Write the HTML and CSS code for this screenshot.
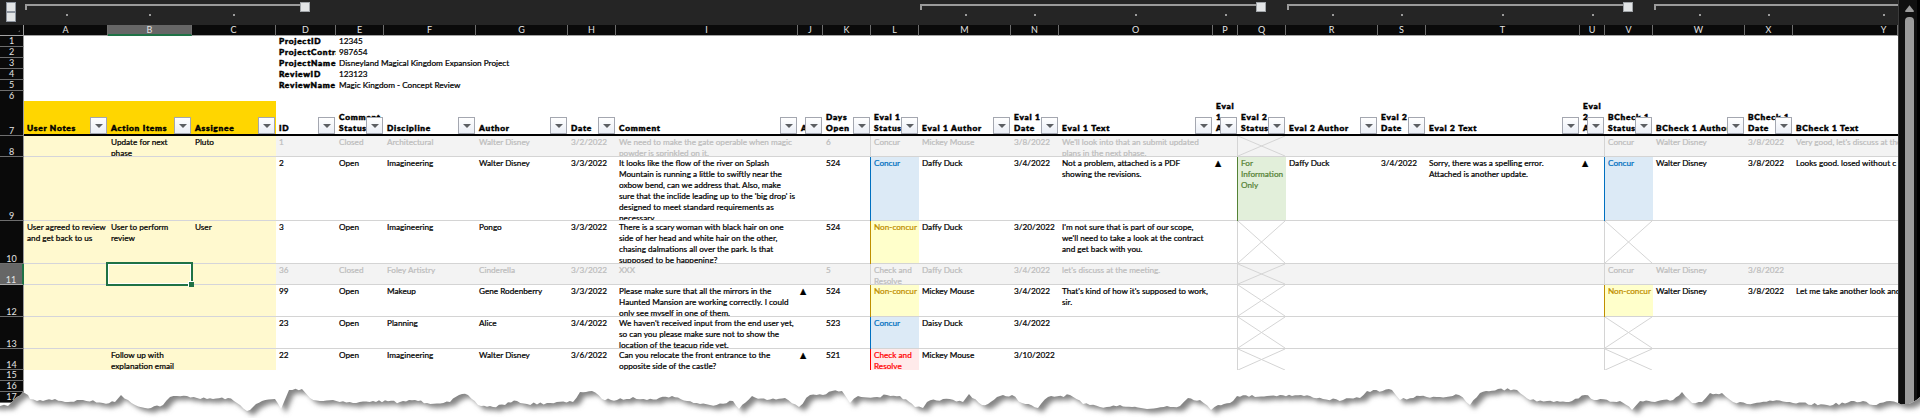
FILE: index.html
```html
<!DOCTYPE html>
<html lang="en">
<head>
<meta charset="utf-8">
<title>Review comments</title>
<link rel="stylesheet" href="styles.css">
</head>
<body>
<div class="app">
  <div class="main">
    <div class="outline cols" id="outline"></div>
    <div class="letters cols" id="letters"></div>
    <div class="rows" id="rows"></div>
    <div class="selection"><i></i></div>
  </div>
  <div class="scroll">
    <svg class="up" width="9" height="7" viewBox="0 0 9 7"><path d="M4.5 0.3 L9 6 Q9 7 8 7 H1 Q0 7 0 6 Z" fill="#9b9b9b"/></svg>
    <div class="thumb"></div>
  </div>
  <svg class="tear" id="tear" width="1920" height="50" viewBox="0 368 1920 50"></svg>
</div>
<script src="app.js"></script>
</body>
</html>
```
FILE: styles.css
```css
* { box-sizing: border-box; }
body {
  margin: 0;
  width: 1920px;
  height: 418px;
  overflow: hidden;
  background: #fff;
  color: #000;
  font: 8.2px/11px Lato, sans-serif;
}
.app { position: relative; display: flex; width: 1920px; height: 418px; overflow: hidden; }
.main { position: relative; width: 1898px; overflow: hidden; }
.cols {
  display: grid;
  grid-template-columns: 24px 84px 84px 84px 60px 48px 92px 92px 48px 182px 25px 48px 48px 92px 48px 154px 25px 48px 92px 48px 154px 25px 48px 92px 48px 105px;
}

/* outline bar */
.outline { height: 25px; background: #252525; }
.levels { display: flex; flex-direction: column; align-items: flex-start; padding: 2px 0 0 6px; }
.levels i { width: 10px; height: 10px; background: #e3e5e6; border: 1px solid #8d949e; }
.group { border-top: 2px solid #9b9b9b; margin-top: 4px; padding-top: 8px; display: flex; justify-content: center; }
.group i { width: 2px; height: 2px; background: #9b9b9b; }
.group.start { margin-left: 1px; background: linear-gradient(#9b9b9b, #9b9b9b) 0 0 / 2px 4px no-repeat; }
.group.wide { padding-left: 76px; }
.toggle { padding-top: 2px; display: flex; }
.toggle::before { content: ""; width: var(--arm); height: 2px; margin-top: 2px; background: #9b9b9b; }
.toggle i { width: 10px; height: 10px; background: #e3e5e6; border: 1px solid #a0a4a8; }

/* column letters */
.letters { height: 11px; background: #0a0a0a; color: #e4e4e4; font-size: 9px; text-align: center; }
.letters > div { border-right: 1px solid #6e6e6e; border-bottom: 1px solid #a3a3a3; height: 11px; line-height: 10px; overflow: hidden; }
.letters > .current { background: #666; border-bottom: 2px solid #1f7246; }
.letters > .corner { border-right-color: #9b9b9b; display: flex; justify-content: flex-end; align-items: flex-end; padding: 0 3px 3px 0; }
.corner::after { content: ""; border: 1.5px solid #555; border-left-color: transparent; border-top-color: transparent; }
.letters > .wide { padding-left: 77px; }

/* rows */
.row { height: var(--h); }
.num {
  display: flex; align-items: flex-end; justify-content: center;
  background: #0a0a0a; color: #e4e4e4; font-size: 9px; line-height: 10px;
  border-right: 1px solid #9b9b9b; border-bottom: 1px solid #6e6e6e;
}
.head .num, .data .num { line-height: 8px; }
.num.current { background: #666; border-right: 2px solid #1f7246; border-bottom-color: #aaa; }
.cell { padding-left: 3px; white-space: pre; overflow: hidden; height: var(--h); -webkit-text-stroke: .22px currentColor; }
.data .cell { padding-top: 1px; }
.spill { overflow: visible; }
.bold { font-weight: 900; font-size: 8.3px; letter-spacing: .76px; -webkit-text-stroke: .5px currentColor; }
.lined .cell { border-bottom: 1px solid #d4d4d4; }
.note { background: #fff9cf; }
.lined .note { border-bottom-color: #d5d5da; }
.closed .cell:not(.note) { background: #f3f3f3; color: #bdbdbd; }

/* filter header */
.head .cell {
  position: relative; display: flex; align-items: flex-end;
  border-bottom: 2px solid #000;
}
.head .note { background: #ffd600; }
.filter {
  position: absolute; right: 1px; bottom: 0; width: 17px; height: 17px;
  border: 1px solid #a4a7b0; background: linear-gradient(#fff, #eaeef6);
  display: flex; align-items: center; justify-content: center;
}
.filter::after { content: ""; border: 4px solid transparent; border-top: 4px solid #5c5f63; border-bottom: 0; }

/* status colours */
.concur { background: #dceaf6; color: #0070c0; box-shadow: -1px 0 #0070c0; }
.nonconcur { background: #ffffcb; color: #bf8f00; box-shadow: -1px 0 #bf8f00; }
.info { background: #e2efda; color: #548235; box-shadow: -1px 0 #548235; }
.resolve { background: #ffeaea; color: #ff0000; box-shadow: -1px 0 #ff0000; }
.muted, .cross { box-shadow: -1px 0 #d4d4d4; }
.data .cross { padding: 0; }
.cross svg { display: block; width: 100%; height: 100%; }
.flag { font-family: "DejaVu Sans", sans-serif; font-size: 8px; padding-left: 2px; }

.selection {
  position: absolute; left: 106px; top: 262px; width: 87px; height: 24px;
  border: 2px solid #1f7246; box-shadow: inset 0 0 0 1px #fff;
}
.selection i { position: absolute; right: -3px; bottom: -3px; width: 6px; height: 6px; background: #1f7246; border: solid #fff; border-width: 1px 0 0 1px; }

/* scroll bar */
.scroll { width: 22px; background: linear-gradient(90deg, #3a3a3a 1px, #101010 1px, #101010 19px, #000 19px); padding: 5px 0 0 7px; }
.up { display: block; }
.thumb { margin-top: 5px; width: 9px; height: 401px; border-radius: 4px 4px 0 0; background: #9b9b9b; }

.tear { position: absolute; left: 0; top: 368px; }
```
FILE: app.js
```js
const letters = 'ABCDEFGHIJKLMNOPQRSTUVWXY'.split('');
const noteCols = 'ABC';

// outline brackets above the columns
const starts = 'AMRW', toggles = { D: 24, Q: 18, V: 18 };
document.getElementById('outline').innerHTML = '<div class="levels"><i></i><i></i></div>' + letters.map(c => {
  if (c in toggles) return `<div class="toggle" style="--arm:${toggles[c]}px"><i></i></div>`;
  if ('ABCMNOPRSTUWXY'.includes(c)) return `<div class="group${starts.includes(c) ? ' start' : ''}${c === 'Y' ? ' wide' : ''}"><i></i></div>`;
  return '<div></div>';
}).join('');

document.getElementById('letters').innerHTML = '<div class="corner"></div>' + letters.map(c =>
  `<div class="${c === 'B' ? 'current' : ''}${c === 'Y' ? 'wide' : ''}">${c}</div>`).join('');

const rows = [
  { h: 11, D: 'ProjectID', E: '12345' },
  { h: 11, D: 'ProjectContract', E: '987654' },
  { h: 11, D: 'ProjectName', E: 'Disneyland Magical Kingdom Expansion Project' },
  { h: 11, D: 'ReviewID', E: '123123' },
  { h: 11, D: 'ReviewName', E: 'Magic Kingdom - Concept Review' },
  { h: 10 },
  { h: 35, head: 1, A: 'User Notes', B: 'Action Items', C: 'Assignee', D: 'ID', E: 'Comment\nStatus', F: 'Discipline', G: 'Author', H: 'Date', I: 'Comment', J: 'A', K: 'Days\nOpen', L: 'Eval 1\nStatus', M: 'Eval 1 Author', N: 'Eval 1\nDate', O: 'Eval 1 Text', P: 'Eval\n1\nA', Q: 'Eval 2\nStatus', R: 'Eval 2 Author', S: 'Eval 2\nDate', T: 'Eval 2 Text', U: 'Eval\n2\nA', V: 'BCheck 1\nStatus', W: 'BCheck 1 Author', X: 'BCheck 1\nDate', Y: 'BCheck 1 Text' },
  { h: 21, closed: 1, B: 'Update for next\nphase', C: 'Pluto', D: '1', E: 'Closed', F: 'Architectural', G: 'Walter Disney', H: '3/2/2022', I: 'We need to make the gate operable when magic\npowder is sprinkled on it.', K: '6', L: 'Concur', M: 'Mickey Mouse', N: '3/8/2022', O: "We'll look into that an submit updated\nplans in the next phase.", Q: 'x', V: 'Concur', W: 'Walter Disney', X: '3/8/2022', Y: "Very good, let's discuss at the" },
  { h: 64, D: '2', E: 'Open', F: 'Imagineering', G: 'Walter Disney', H: '3/3/2022', I: "It looks like the flow of the river on Splash\nMountain is running a little to swiftly near the\noxbow bend, can we address that. Also, make\nsure that the inclide leading up to the 'big drop' is\ndesigned to meet standard requirements as\nnecessary.", K: '524', L: 'Concur', M: 'Daffy Duck', N: '3/4/2022', O: 'Not a problem, attached is a PDF\nshowing the revisions.', P: '▲', Q: 'For\nInformation\nOnly', R: 'Daffy Duck', S: '3/4/2022', T: 'Sorry, there was a spelling error.\nAttached is another update.', U: '▲', V: 'Concur', W: 'Walter Disney', X: '3/8/2022', Y: 'Looks good. losed without c' },
  { h: 43, A: 'User agreed to review\nand get back to us', B: 'User to perform\nreview', C: 'User', D: '3', E: 'Open', F: 'Imagineering', G: 'Pongo', H: '3/3/2022', I: 'There is a scary woman with black hair on one\nside of her head and white hair on the other,\nchasing dalmations all over the park. Is that\nsupposed to be happening?', K: '524', L: 'Non-concur', M: 'Daffy Duck', N: '3/20/2022', O: "I'm not sure that is part of our scope,\nwe'll need to take a look at the contract\nand get back with you.", Q: 'x', V: 'x' },
  { h: 21, closed: 1, D: '36', E: 'Closed', F: 'Foley Artistry', G: 'Cinderella', H: '3/3/2022', I: 'XXX', K: '5', L: 'Check and\nResolve', M: 'Daffy Duck', N: '3/4/2022', O: "let's discuss at the meeting.", Q: 'x', V: 'Concur', W: 'Walter Disney', X: '3/8/2022' },
  { h: 32, D: '99', E: 'Open', F: 'Makeup', G: 'Gene Rodenberry', H: '3/3/2022', I: 'Please make sure that all the mirrors in the\nHaunted Mansion are working correctly. I could\nonly see myself in one of them.', J: '▲', K: '524', L: 'Non-concur', M: 'Mickey Mouse', N: '3/4/2022', O: "That's kind of how it's supposed to work,\nsir.", Q: 'x', V: 'Non-concur', W: 'Walter Disney', X: '3/8/2022', Y: 'Let me take another look and' },
  { h: 32, D: '23', E: 'Open', F: 'Planning', G: 'Alice', H: '3/4/2022', I: "We haven't received input from the end user yet,\nso can you please make sure not to show the\nlocation of the teacup ride yet.", K: '523', L: 'Concur', M: 'Daisy Duck', N: '3/4/2022', Q: 'x', V: 'x' },
  { h: 21, B: 'Follow up with\nexplanation email', D: '22', E: 'Open', F: 'Imagineering', G: 'Walter Disney', H: '3/6/2022', I: 'Can you relocate the front entrance to the\nopposite side of the castle?', J: '▲', K: '521', L: 'Check and\nResolve', M: 'Mickey Mouse', N: '3/10/2022', Q: 'x', V: 'x' },
  { h: 11 }, { h: 11 }, { h: 11 }
];

const statusClass = { C: 'concur', N: 'nonconcur', F: 'info' };

function cell(row, n, c) {
  const text = row[c] || '', cls = ['cell'];
  if (n >= 7 && n <= 14 && noteCols.includes(c)) cls.push('note');
  if (row.head) {
    return `<div class="${cls.join(' ')} bold"><span>${text}</span>${c === 'Y' ? '' : '<i class="filter"></i>'}</div>`;
  }
  if (text === 'x') {
    return `<div class="${cls.join(' ')} cross"><svg viewBox="0 0 48 ${row.h}" preserveAspectRatio="none"><path d="M0 0 L47 ${row.h} M47 0 L0 ${row.h}" stroke="#d4d4d4" fill="none"/></svg></div>`;
  }
  if (n < 6 && c === 'D') cls.push('bold');
  if (n < 6 && c === 'E') cls.push('spill');
  if (text === '▲') cls.push('flag');
  if ('LQV'.includes(c) && text) {
    cls.push(row.closed ? 'muted' : text.startsWith('Check') ? 'resolve' : statusClass[text[0]]);
  }
  return `<div class="${cls.join(' ')}">${text}</div>`;
}

document.getElementById('rows').innerHTML = rows.map((row, i) => {
  const n = i + 1;
  const cls = ['row', 'cols', row.head && 'head', row.closed && 'closed', n > 7 && n < 15 && 'data', n > 7 && n < 14 && 'lined'].filter(Boolean).join(' ');
  return `<div class="${cls}" style="--h:${row.h}px"><div class="num${n === 11 ? ' current' : ''}">${n}</div>${letters.map(c => cell(row, n, c)).join('')}</div>`;
}).join('');

// torn lower edge
const edge = [
  [0,406],[8,406],[12,402],[17,397],[23,392],[28,395],[30,399],[37,401],[55,399],[65,402],[83,400],[103,403],[115,402],[121,395],[128,400],[135,405],[145,408],[163,405],[170,397],[187,396],[207,399],[228,398],[237,403],[247,411],[262,401],[275,399],[281,409],[289,390],[302,389],[310,398],[320,401],[333,400],[353,403],[373,401],
  [400,402],[415,400],[427,403],[450,402],[459,395],[468,395],[478,405],[493,407],[517,401],[527,404],[547,403],[573,402],[580,392],[592,391],[602,399],[617,400],[633,397],[647,400],[672,396],[687,401],[700,404],[710,405],[733,401],[739,409],[752,396],[767,400],[785,398],[799,407],
  [810,395],[823,395],[832,391],[842,391],[850,403],[858,396],[877,397],[887,395],[900,396],[915,407],[923,408],[927,402],[943,399],[963,402],[969,394],[982,405],[988,404],[1000,396],[1012,395],[1022,403],[1038,408],[1048,397],[1070,395],[1083,404],[1100,407],[1120,405],[1147,409],[1167,406],[1180,406],
  [1188,398],[1200,400],[1211,410],[1218,405],[1233,401],[1237,396],[1267,396],[1280,395],[1310,396],[1323,399],[1343,400],[1360,398],[1367,391],[1392,390],[1400,400],[1420,396],[1440,397],[1459,395],[1470,405],[1480,393],[1498,389],[1517,390],[1530,400],[1547,401],
  [1557,401],[1572,401],[1585,395],[1597,400],[1620,401],[1632,410],[1640,401],[1655,402],[1673,400],[1682,392],[1692,403],[1702,402],[1710,393],[1722,393],[1733,402],[1747,404],[1773,401],[1793,403],[1827,405],[1863,401],[1873,405],[1890,401],[1898,403],[1905,404],[1913,402],[1920,397]
];
let seed = 7;
const rnd = () => (seed = (seed * 16807) % 2147483647) / 2147483647;
const pts = [];
edge.forEach(([x, y], i) => {
  pts.push([x, y]);
  const next = edge[i + 1];
  if (!next) return;
  const steps = Math.floor((next[0] - x) / 3);
  for (let k = 1; k < steps; k++) {
    const t = k / steps;
    pts.push([x + (next[0] - x) * t, y + (next[1] - y) * t + (rnd() - .5) * 2.6]);
  }
});
const line = pts.map(p => p.map(v => v.toFixed(1)).join(' ')).join(' L');
document.getElementById('tear').innerHTML = `
  <defs>
    <clipPath id="below"><path d="M${line} L1920 430 L0 430 Z"/></clipPath>
    <filter id="soft" x="-2%" y="-50%" width="104%" height="200%"><feGaussianBlur stdDeviation="2.6"/></filter>
  </defs>
  <g clip-path="url(#below)">
    <rect y="360" width="1920" height="70" fill="#fff"/>
    <path d="M-30 340 L-30 402 L${line} L1960 397 L1960 340 Z" transform="translate(5 4)" fill="#858585" filter="url(#soft)"/>
  </g>`;
```
